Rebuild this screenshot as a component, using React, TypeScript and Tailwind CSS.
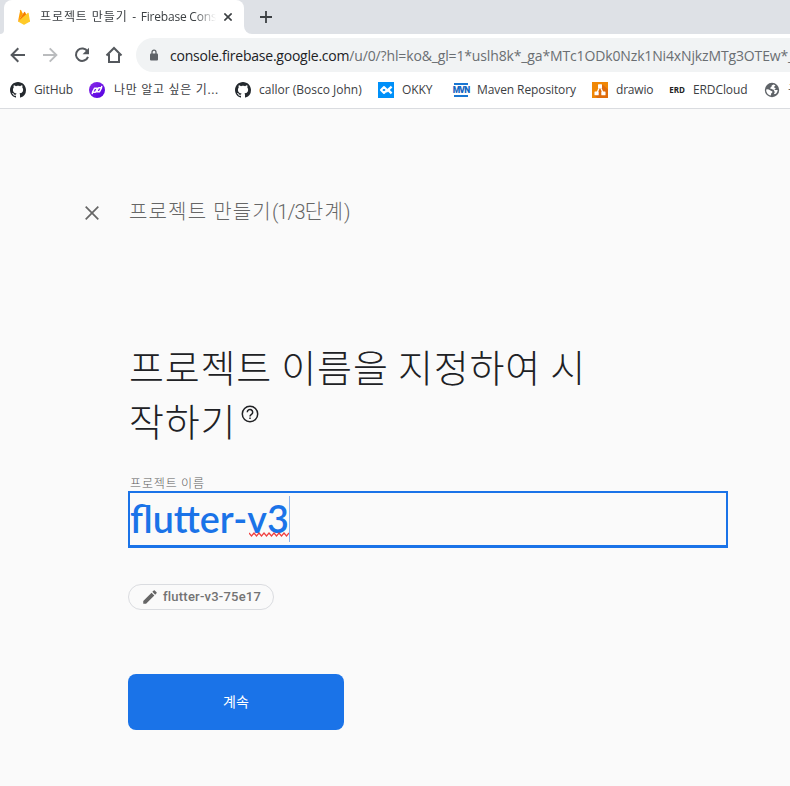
import React from "react";

const GITHUB =
  "M8 0C3.58 0 0 3.58 0 8c0 3.54 2.29 6.53 5.47 7.59.4.07.55-.17.55-.38 0-.19-.01-.82-.01-1.49-2.01.37-2.53-.49-2.69-.94-.09-.23-.48-.94-.82-1.13-.28-.15-.68-.52-.01-.53.63-.01 1.08.58 1.23.82.72 1.21 1.87.87 2.33.66.07-.52.28-.87.51-1.07-1.78-.2-3.64-.89-3.64-3.95 0-.87.31-1.59.82-2.15-.08-.2-.36-1.02.08-2.12 0 0 .67-.21 2.2.82.64-.18 1.32-.27 2-.27s1.36.09 2 .27c1.53-1.04 2.2-.82 2.2-.82.44 1.1.16 1.92.08 2.12.51.56.82 1.27.82 2.15 0 3.07-1.87 3.75-3.65 3.95.29.25.54.73.54 1.48 0 1.07-.01 1.93-.01 2.2 0 .21.15.46.55.38A8.01 8.01 0 0 0 16 8c0-4.42-3.58-8-8-8";

const GithubIcon = () => (
  <svg viewBox="0 0 16 16" className="size-4 shrink-0">
    <path d={GITHUB} fill="#24292e" />
  </svg>
);

const PurpleIcon = () => (
  <svg viewBox="0 0 16 16" className="size-4 shrink-0">
    <defs>
      <linearGradient id="purple" x1="0" y1="0" x2="1" y2="1">
        <stop offset="0" stopColor="#8a2be8" />
        <stop offset="1" stopColor="#5200e0" />
      </linearGradient>
    </defs>
    <circle cx="8" cy="8" r="8" fill="url(#purple)" />
    <path d="M3.200 12.200 3.600 9.800 5.600 6.200H8.400L6.400 10.200H4.200M12.800 3.800 12.400 6.200 10.400 9.800H7.600L9.600 5.800H11.800" fill="none" stroke="#fff" strokeWidth="1.400" strokeLinejoin="round" />
  </svg>
);

const OkkyIcon = () => (
  <svg viewBox="0 0 16 16" className="size-4 shrink-0">
    <path d="M0 0h16v16H0z" fill="#0090f9" />
    <path d="M6 5 9 8 6 11 3 8z" fill="none" stroke="#fff" strokeWidth="2" strokeLinejoin="round" />
    <path d="M8 9.800 13.600 4.600M9.200 7.200 13.600 11.400" fill="none" stroke="#fff" strokeWidth="2.300" />
  </svg>
);

const MvnIcon = () => (
  <span className="flex h-[14px] w-4 shrink-0 justify-center">
    <span className="flex h-[14px] w-[14px] items-center justify-center border-y-2 border-[#1976d2] font-['Roboto'] text-[8.500px] font-black leading-[8px] tracking-[-0.8px] text-[#1565c0]">
      MVN
    </span>
  </span>
);

const DrawioIcon = () => (
  <svg viewBox="0 0 16 16" className="size-4 shrink-0">
    <path d="M0 0h16v16H0z" fill="#f08705" />
    <path d="m10.500 2.500 5.500 5V16H5.500l-3-2.500z" fill="#df6c0c" />
    <path d="M7.600 5 4.900 11M8.400 5l2.700 6" stroke="#fff" strokeWidth="1.300" />
    <rect x="6" y="2.300" width="4" height="3.800" rx=".5" fill="#fff" />
    <rect x="2.500" y="9.600" width="4.200" height="3.600" rx=".5" fill="#fff" />
    <rect x="9.300" y="9.600" width="4.200" height="3.600" rx=".5" fill="#fff" />
  </svg>
);

const ErdIcon = () => (
  <span className="flex h-4 w-4 shrink-0 items-center justify-center font-['Open_Sans'] text-[8px] font-bold text-[#222]">ERD</span>
);

const GlobeIcon = () => (
  <svg viewBox="0 0 16 16" className="size-4 shrink-0">
    <circle cx="8" cy="8" r="7.200" fill="#5f6368" />
    <path d="M2.200 7.500Q4.500 7 6 8.200L8.400 9.600Q8.800 10.800 7.300 11.200L6.800 13.500C4 13 2 10.500 2.200 7.500zM9.400 2.400Q7 3 7.500 4.800L5.800 6.200Q8 7 9.200 7.800L13.700 8Q13.500 10.200 12 11.800L9.800 12.300 10.800 10 9.800 8.500 11.800 6.300 9.800 5.200 11.500 3.200z" fill="#fff" />
  </svg>
);

const Bookmark = ({ icon, box, text, label }: { icon: React.ReactNode; box: string; text: string; label: string }) => (
  <div className={"flex shrink-0 items-center gap-2 " + box}>
    {icon}
    <span className={"whitespace-nowrap " + text}>{label}</span>
  </div>
);

export default function App() {
  return (
    <div className="h-[786px] w-[790px] overflow-hidden bg-[#fafafa] font-['Noto_Sans','Noto_Sans_CJK_KR',sans-serif] text-[#3c4043]">
      <header>
        <div className="flex h-[34px] bg-[#dee1e6]">
          <div className="flex w-[4px] items-end bg-white">
            <div className="h-full w-full rounded-br-[8px] bg-[#dee1e6]" />
          </div>
          <div className="flex w-[240px] items-center rounded-t-[8px] bg-white pl-3">
            <svg viewBox="0 0 16 16" className="size-4 shrink-0">
              <path d="M2 12.500 4.200 1.200Q4.500.4 5 1l2 3.900z" fill="#ffa000" />
              <path d="M2 12.500 8.200 3q.4-.5.8 0l5 9.500z" fill="#f57c00" />
              <path d="m2 12.500 9.900-8.700q.5-.4.700.2L14 12.500 8.700 15.600q-.7.400-1.400 0z" fill="#ffca28" />
            </svg>
            <div className="ml-2 w-[176px] overflow-hidden whitespace-nowrap font-['Open_Sans','Noto_Sans_CJK_KR',sans-serif] text-[12px] [mask-image:linear-gradient(to_right,#000_88%,transparent)]">
              <span className="tracking-[0.9px]">프로젝트 만들기</span>
              <span className="[word-spacing:1.500px]"> - </span>
              <span className="tracking-[-0.2px]">Firebase Console</span>
            </div>
            <svg viewBox="0 0 8 8" className="ml-2 size-2" stroke="#3c4043" strokeWidth="1.600">
              <path d="m.4.4 7.200 7.200M7.600.4.4 7.600" />
            </svg>
          </div>
          <div className="flex flex-1 bg-white">
            <div className="flex flex-1 items-center rounded-bl-[8px] bg-[#dee1e6] pl-4">
              <svg viewBox="0 0 12 12" className="size-3" stroke="#3c4043" strokeWidth="1.800">
                <path d="M6 0v12M0 6h12" />
              </svg>
            </div>
          </div>
        </div>
        <div className="flex h-[42px] items-center bg-white pl-[10px]">
          <svg viewBox="0 0 16 16" className="size-4" fill="none" stroke="#54585d" strokeWidth="2">
            <path d="M15 8H2M8.300 1.300 1.600 8l6.700 6.700" />
          </svg>
          <svg viewBox="0 0 16 16" className="ml-4 size-4" fill="none" stroke="#babcbe" strokeWidth="1.900">
            <path d="M1 8h13M7.700 1.300 14.400 8l-6.700 6.700" />
          </svg>
          <svg viewBox="0 0 16 16" className="ml-4 size-4" fill="none" stroke="#54585d" strokeWidth="2">
            <path d="M13.500 4.500A6.200 6.200 0 1 0 14 9.800" />
            <path d="M15 .8v6.400H8.600z" fill="#54585d" stroke="none" />
          </svg>
          <svg viewBox="0 0 18 18" className="ml-[15px] size-[18px]" fill="none" stroke="#54585d" strokeWidth="2">
            <path d="M1.500 9.500 9 2l7.500 7.500M4 8v8h10V8" />
          </svg>
          <div className="ml-[13px] flex h-[34px] flex-1 items-center overflow-hidden rounded-l-full bg-[#f1f3f4] pl-[14px]">
            <svg viewBox="0 0 8 12" className="h-3 w-2 shrink-0">
              <path d="M2 5V3.200a2 2 0 0 1 4 0V5" fill="none" stroke="#5f6368" strokeWidth="1.300" />
              <rect y="4.500" width="8" height="7" rx="1" fill="#5f6368" />
            </svg>
            <div className="ml-3 whitespace-nowrap font-['Open_Sans',sans-serif] text-[14px] text-[#6a6e72]">
              <span className="tracking-[-0.23px] text-[#202124]">console.firebase.google.com</span>
              <span className="tracking-[-0.14px]">/u/0/?hl=ko&amp;_gl=1*uslh8k*_ga*MTc1ODk0Nzk1Ni4xNjkzMTg3OTEw*_</span>
            </div>
          </div>
        </div>
        <nav className="flex h-[33px] overflow-hidden border-b border-[#dadce0] bg-white pb-[4px] pl-[10px] font-['Open_Sans','Noto_Sans_CJK_KR',sans-serif] text-[12px]">
          <Bookmark icon={<GithubIcon />} box="w-[79px]" text="tracking-[-0.1px]" label="GitHub" />
          <Bookmark icon={<PurpleIcon />} box="w-[146px]" text="pl-px tracking-[0.68px]" label="나만 알고 싶은 기..." />
          <Bookmark icon={<GithubIcon />} box="w-[143px]" text="" label="callor (Bosco John)" />
          <Bookmark icon={<OkkyIcon />} box="w-[75px]" text="tracking-[-0.1px]" label="OKKY" />
          <Bookmark icon={<MvnIcon />} box="w-[139px]" text="tracking-[-0.1px]" label="Maven Repository" />
          <Bookmark icon={<DrawioIcon />} box="w-[77px]" text="tracking-[-0.2px]" label="drawio" />
          <Bookmark icon={<ErdIcon />} box="w-[95px]" text="tracking-[-0.1px]" label="ERDCloud" />
          <Bookmark icon={<GlobeIcon />} box="w-[60px]" text="" label="구글" />
        </nav>
      </header>

      <main className="pl-[85px] pt-[87px]">
        <div className="flex h-[32px] items-center">
          <svg viewBox="0 0 14 14" className="mt-[2px] size-[14px]" stroke="#666" strokeWidth="1.700">
            <path d="m.7.7 12.600 12.600M13.300.7.7 13.300" />
          </svg>
          <p className="ml-[30px] whitespace-nowrap font-['Roboto','Noto_Sans_CJK_KR',sans-serif] text-[20px] font-light leading-[32px] text-[#666]">
            <span className="tracking-[1.150px]">프로젝트 만들기</span>
            <span className="tracking-[-0.9px]">(1/3</span>
            <span className="tracking-[1.200px]">단계)</span>
          </p>
        </div>

        <div className="ml-[43px] w-[600px]">
          <h1 className="mt-[111px] whitespace-nowrap pl-px font-['Noto_Sans_CJK_KR',sans-serif] text-[38px] font-light leading-[54px] tracking-[0.82px] text-[#202124]">
            <span className="block">프로젝트 이름을 지정하여 시</span>
            <span className="flex">
              작하기
              <svg viewBox="0 0 18 18" className="ml-[5px] mt-[12px] size-[18px]" fill="none" stroke="#202124" strokeWidth="1.500">
                <circle cx="9" cy="9" r="7.700" />
                <path d="M6.300 7.300a2.700 2.700 0 1 1 4.200 2.100C9.500 10.100 9 10.500 9 11.400M9 12.400v1.600" />
              </svg>
            </span>
          </h1>

          <label className="mt-[28px] block pl-[2px] font-['Noto_Sans_CJK_KR',sans-serif] text-[12px] font-light leading-[16px] tracking-[0.85px] text-[#5c5c5c]">프로젝트 이름</label>
          <div className="flex h-[57px] w-[600px] items-start border-2 border-b-[3px] border-[#1a73e8] pt-[3px]">
            <div className="relative flex h-[46px] items-center whitespace-nowrap border-r border-[#8ab4f0] pb-px font-['Lato',sans-serif] text-[37.700px] font-semibold leading-[44px] text-[#1a73e8]">
              flutter-v3
              <svg viewBox="0 0 40 5" className="absolute bottom-[5px] right-0 h-[5px] w-10" fill="none" stroke="#f04040" strokeWidth="1.200">
                <path d="m0 1 2.500 3 2.500-3 2.500 3 2.500-3 2.500 3 2.500-3 2.500 3 2.500-3 2.500 3 2.500-3 2.500 3 2.500-3 2.500 3 2.500-3 2.500 3 2.500-3" />
              </svg>
            </div>
          </div>

          <div className="mt-[36px] flex h-[26px] w-[146px] items-center rounded-full border border-[#dadce0] pl-[12px] font-['Roboto',sans-serif] text-[13px] font-medium text-[#737373]">
            <svg viewBox="0 0 24 24" className="size-[18px] shrink-0" fill="#666">
              <path d="M3 17.250V21h3.750L17.810 9.940l-3.750-3.750L3 17.250zM20.710 7.040a1 1 0 0 0 0-1.410l-2.340-2.340a1 1 0 0 0-1.410 0l-1.830 1.830 3.750 3.750 1.830-1.830z" />
            </svg>
            <span className="ml-1 tracking-[0.22px]">flutter-v3-75e17</span>
          </div>

          <button className="mt-[64px] flex h-[56px] w-[216px] items-center justify-center rounded-[8px] bg-[#1a73e8] pb-[2px] font-['Noto_Sans_CJK_KR',sans-serif] text-[14px] text-white">계속</button>
        </div>
      </main>
    </div>
  );
}
